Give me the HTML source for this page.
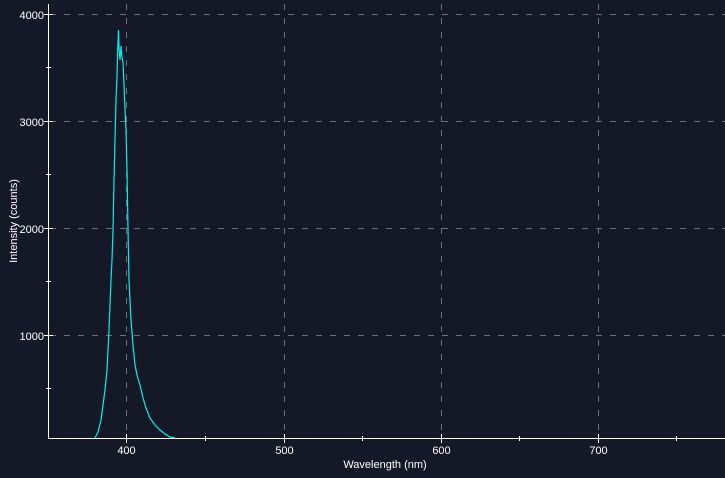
<!DOCTYPE html>
<html><head><style>
html,body{margin:0;padding:0;background:#151826;}
svg{display:block}
text{font-family:"Liberation Sans",sans-serif;font-size:11px;fill:#fff}
</style></head><body>
<svg width="725" height="478" viewBox="0 0 725 478">
<rect width="725" height="478" fill="#151826"/>
<g stroke="#6e6e74" stroke-width="1" stroke-dasharray="6,8">
<line x1="126.5" y1="4" x2="126.5" y2="437"/>
<line x1="284.5" y1="4" x2="284.5" y2="437"/>
<line x1="441.5" y1="4" x2="441.5" y2="437"/>
<line x1="598.5" y1="4" x2="598.5" y2="437"/>
<line x1="50" y1="14.5" x2="725" y2="14.5"/>
<line x1="50" y1="121.5" x2="725" y2="121.5"/>
<line x1="50" y1="228.5" x2="725" y2="228.5"/>
<line x1="50" y1="335.5" x2="725" y2="335.5"/>
</g>
<g stroke="#fff" stroke-width="1">
<line x1="48.5" y1="4" x2="48.5" y2="438.5"/>
<line x1="48" y1="438.5" x2="725" y2="438.5"/>
<line x1="44" y1="14.5" x2="53" y2="14.5"/>
<line x1="44" y1="121.5" x2="53" y2="121.5"/>
<line x1="44" y1="228.5" x2="53" y2="228.5"/>
<line x1="44" y1="335.5" x2="53" y2="335.5"/>
<line x1="46" y1="67.5" x2="51" y2="67.5"/>
<line x1="46" y1="174.5" x2="51" y2="174.5"/>
<line x1="46" y1="281.5" x2="51" y2="281.5"/>
<line x1="46" y1="388.5" x2="51" y2="388.5"/>
<line x1="126.5" y1="434" x2="126.5" y2="443"/>
<line x1="284.5" y1="434" x2="284.5" y2="443"/>
<line x1="441.5" y1="434" x2="441.5" y2="443"/>
<line x1="598.5" y1="434" x2="598.5" y2="443"/>
<line x1="205.5" y1="436" x2="205.5" y2="441"/>
<line x1="362.5" y1="436" x2="362.5" y2="441"/>
<line x1="519.5" y1="436" x2="519.5" y2="441"/>
<line x1="676.5" y1="436" x2="676.5" y2="441"/>
</g>
<g text-anchor="end">
<text x="44" y="19">4000</text>
<text x="44" y="126">3000</text>
<text x="44" y="233">2000</text>
<text x="44" y="340">1000</text>
</g>
<g text-anchor="middle">
<text x="126.5" y="454">400</text>
<text x="284.5" y="454">500</text>
<text x="441.5" y="454">600</text>
<text x="598.5" y="454">700</text>
<text x="385" y="468">Wavelength (nm)</text>
<text transform="translate(17,221) rotate(-90)">Intensity (counts)</text>
</g>
<polyline fill="none" stroke="#00f0f0" stroke-width="1.2" points="95,438 98,432 101,420 103,405 105,390 107,370 109,330 111,280 112,260 113,230 114,180 115,140 116,100 117,76 117.5,56 118.5,30 119,48 120,60 121,46 122,58 123,62 124,85 125,110 126,130 127,170 128,230 129,280 130,300 131,320 133,345 135,365 137,375 140,385 143,398 146,408 150,418 155,425 160,430 165,434 170,437 175,438"/>
</svg>
</body></html>
